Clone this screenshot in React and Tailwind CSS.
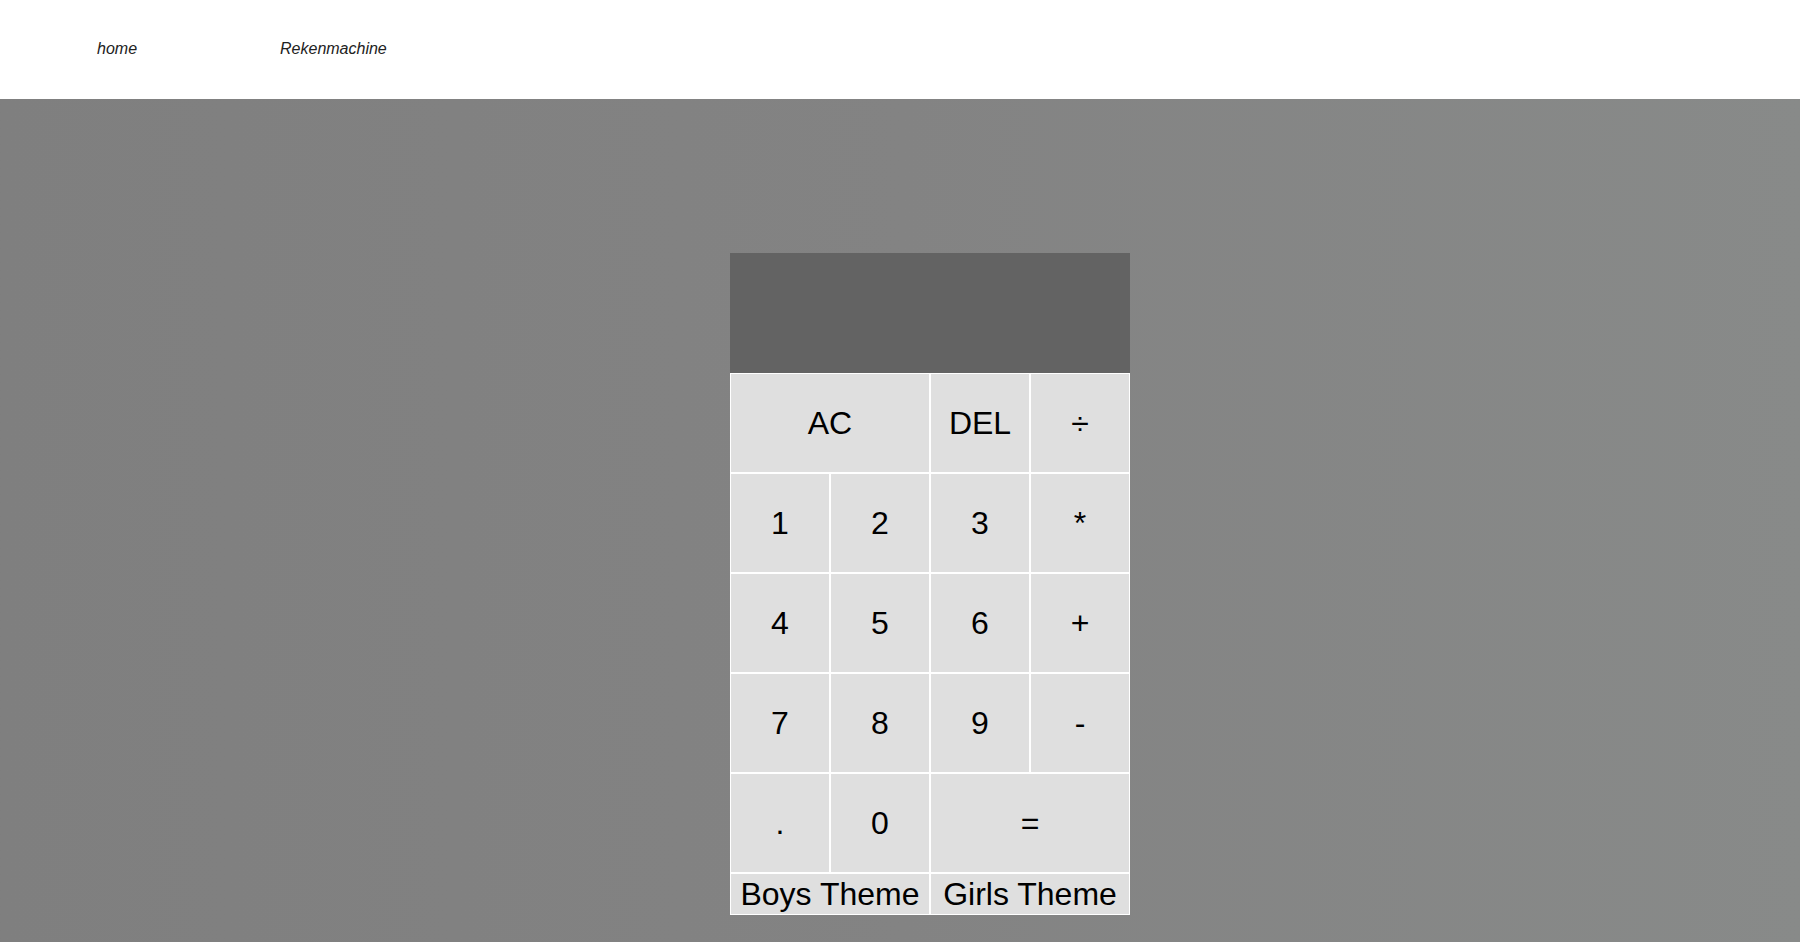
import React, { useState } from 'react';

const keys = [
  { label: 'AC', span: 'col-span-2' },
  { label: 'DEL' },
  { label: '÷' },
  { label: '1' },
  { label: '2' },
  { label: '3' },
  { label: '*' },
  { label: '4' },
  { label: '5' },
  { label: '6' },
  { label: '+' },
  { label: '7' },
  { label: '8' },
  { label: '9' },
  { label: '-' },
  { label: '.' },
  { label: '0' },
  { label: '=', span: 'col-span-2' },
];

const App = () => {
  const [display, setDisplay] = useState('');

  const press = (label) => {
    if (label === 'AC') return setDisplay('');
    if (label === 'DEL') return setDisplay((d) => d.slice(0, -1));
    if (label === '=') return;
    setDisplay((d) => d + label);
  };

  return (
    <div className="min-h-screen flex flex-col font-['Liberation_Sans',Arial,sans-serif]">
      <nav className="h-[99px] bg-white flex items-center pl-[97px] pb-[1px] gap-[143px] text-base italic text-[#222]">
        <a href="#" className="leading-none">home</a>
        <a href="#" className="leading-none">Rekenmachine</a>
      </nav>

      <main className="flex-1 bg-gradient-to-r from-[#7f7f7f] via-[#838383] to-[#888a89] flex justify-center pl-[60px] pt-[154px] pb-[29px]">
        <div className="grid grid-cols-[repeat(4,100px)] grid-rows-[120px_repeat(5,100px)_auto] self-start">
          <div className="col-span-4 bg-[#636363] flex flex-col items-end justify-around px-[10px] text-white break-all">
            <div className="text-2xl text-white/75">{display}</div>
          </div>
          {keys.map((k) => (
            <button
              key={k.label}
              onClick={() => press(k.label)}
              className={`${k.span || ''} border border-white bg-[#dfdfdf] text-[32px] text-black cursor-pointer`}
            >
              {k.label}
            </button>
          ))}
          <button className="col-span-2 border border-white bg-[#dfdfdf] text-[32px] leading-[39px] pt-[1px] text-black cursor-pointer">
            Boys Theme
          </button>
          <button className="col-span-2 border border-white bg-[#dfdfdf] text-[32px] leading-[39px] pt-[1px] text-black cursor-pointer">
            Girls Theme
          </button>
        </div>
      </main>
    </div>
  );
};

export default App;
